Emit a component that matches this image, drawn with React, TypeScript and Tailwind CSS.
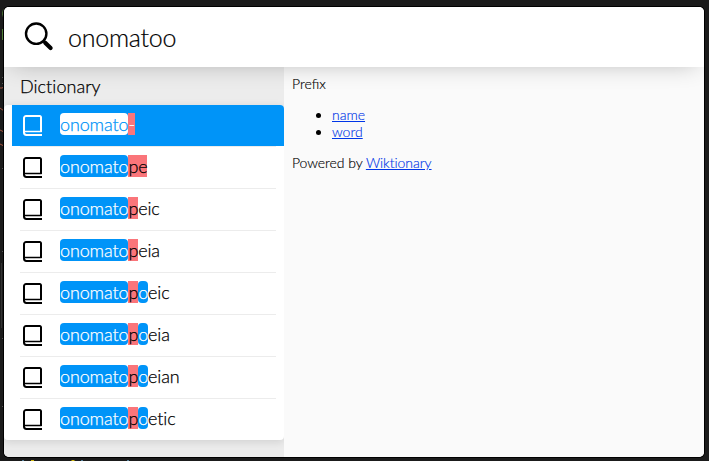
function SearchIcon() {
  return (
    <svg viewBox="0 0 30 30" className="h-[30px] w-[30px] shrink-0" fill="none" stroke="#000">
      <circle cx="12.2" cy="11.7" r="10.2" strokeWidth="2.4" />
      <path d="M19.2 18.7 22 21.5" strokeWidth="2.4" />
      <path d="M21.2 20.7 26.6 26" strokeWidth="4.2" strokeLinecap="round" />
    </svg>
  );
}

function BookIcon() {
  return (
    <svg viewBox="0 0 20 22" className="h-[22px] w-5 shrink-0" fill="none" stroke="currentColor">
      <path d="M19 20H3.4A2.4 2.4 0 0 1 1 17.6V3.1A2.1 2.1 0 0 1 3.1 1H16.8A1.2 1.2 0 0 1 18 2.2V17" strokeWidth="2" />
      <path d="M1.2 16.5H18.6" strokeWidth="1.5" />
    </svg>
  );
}

type Item = { match: string; miss: string; again?: string; rest?: string };

const items: Item[] = [
  { match: "onomato", miss: "-" },
  { match: "onomato", miss: "pe" },
  { match: "onomato", miss: "p", rest: "eic" },
  { match: "onomato", miss: "p", rest: "eia" },
  { match: "onomato", miss: "p", again: "o", rest: "eic" },
  { match: "onomato", miss: "p", again: "o", rest: "eia" },
  { match: "onomato", miss: "p", again: "o", rest: "eian" },
  { match: "onomato", miss: "p", again: "o", rest: "etic" },
];

function Row({ item, selected, last }: { item: Item; selected: boolean; last: boolean }) {
  const mark = selected ? "bg-white text-[#0094f8]" : "bg-[#0094f8] text-white";
  return (
    <li>
      <div className={`flex h-[41px] items-center pl-[11px] ${selected ? "rounded-tr bg-[#0094f8] text-white" : "text-black"}`}>
        <BookIcon />
        <span className="mb-[3px] ml-[17px] text-[18px] leading-[22px] tracking-[-0.13px] [-webkit-text-stroke:0.25px]">
          <span className={`rounded ${mark}`}>{item.match}</span>
          <span className="bg-[#fa757a]">{item.miss}</span>
          {item.again && <span className={`rounded ${mark}`}>{item.again}</span>}
          {item.rest}
        </span>
      </div>
      {!last && <div className="mx-2 h-px bg-[#ececec]" />}
    </li>
  );
}

/* Slivers of the editor that remain visible behind the launcher window. */
function Backdrop() {
  return (
    <svg className="absolute inset-0 h-[461px] w-[709px]" fill="none">
      <path d="M3.5 9.5Q1.5 13.5 3.5 17.5M2.5 29V40" stroke="#4f7c36" />
      <path d="M0 88H2L4 87M0 108 4 111M0 130 4 132M0 144 4 146" stroke="#a4543f" />
      <path d="M2 77.500h2M2 83.500h2M2 168.500h2M2 251.500h2M2 338.500h2M2 406.500h2" stroke="#555" />
      <path d="M1.500 263v65" stroke="#333" />
      <path d="M31 460.500h3M71.500 460.500h3" stroke="#d0b810" />
      <path d="M22 460.500h2M81 460.500h2M127 460.500h2" stroke="#56809a" />
    </svg>
  );
}

export default function App() {
  return (
    <div className="relative h-[461px] w-[709px] overflow-hidden bg-[#1b1b1b] pl-1 pt-[7px] font-['Lato',sans-serif] font-light text-black [font-variant-ligatures:none]">
      <Backdrop />
      <div className="relative flex h-[450px] w-[700px] flex-col overflow-hidden rounded-[5px] bg-[#fafafa] shadow-[0_0_0_1px_#000]">
        <header className="relative z-10 flex h-[60px] shrink-0 items-center bg-white pl-5 shadow-[0_4px_24px_-8px_rgba(0,0,0,0.3)]">
          <SearchIcon />
          <span className="ml-[14px] text-[25px] leading-8 tracking-[-0.25px] [-webkit-text-stroke:0.2px]">onomatoo</span>
        </header>
        <main className="flex flex-1">
          <aside className="w-[280px] bg-[#ececec]">
            <h2 className="h-[38px] pl-4 text-[18px] leading-[38px] tracking-[0.05px] [-webkit-text-stroke:0.25px]">Dictionary</h2>
            <ul className="rounded bg-white pl-2 shadow-[0_2px_8px_rgba(0,0,0,0.12)]">
              {items.map((item, i) => (
                <Row key={i} item={item} selected={i === 0} last={i === items.length - 1} />
              ))}
            </ul>
          </aside>
          <section className="relative flex-1 bg-[#fafafa] p-2 text-[14px] leading-[17px] [-webkit-text-stroke:0.15px]">
            <p className="[font-variant-ligatures:normal]">Prefix</p>
            <ul className="my-[14px] list-disc pl-10">
              <li><a className="text-[#0036e8] underline">name</a></li>
              <li><a className="text-[#0036e8] underline">word</a></li>
            </ul>
            <p className="tracking-[-0.05px]">Powered by <a className="text-[#0036e8] underline">Wiktionary</a></p>
          </section>
        </main>
      </div>
    </div>
  );
}
